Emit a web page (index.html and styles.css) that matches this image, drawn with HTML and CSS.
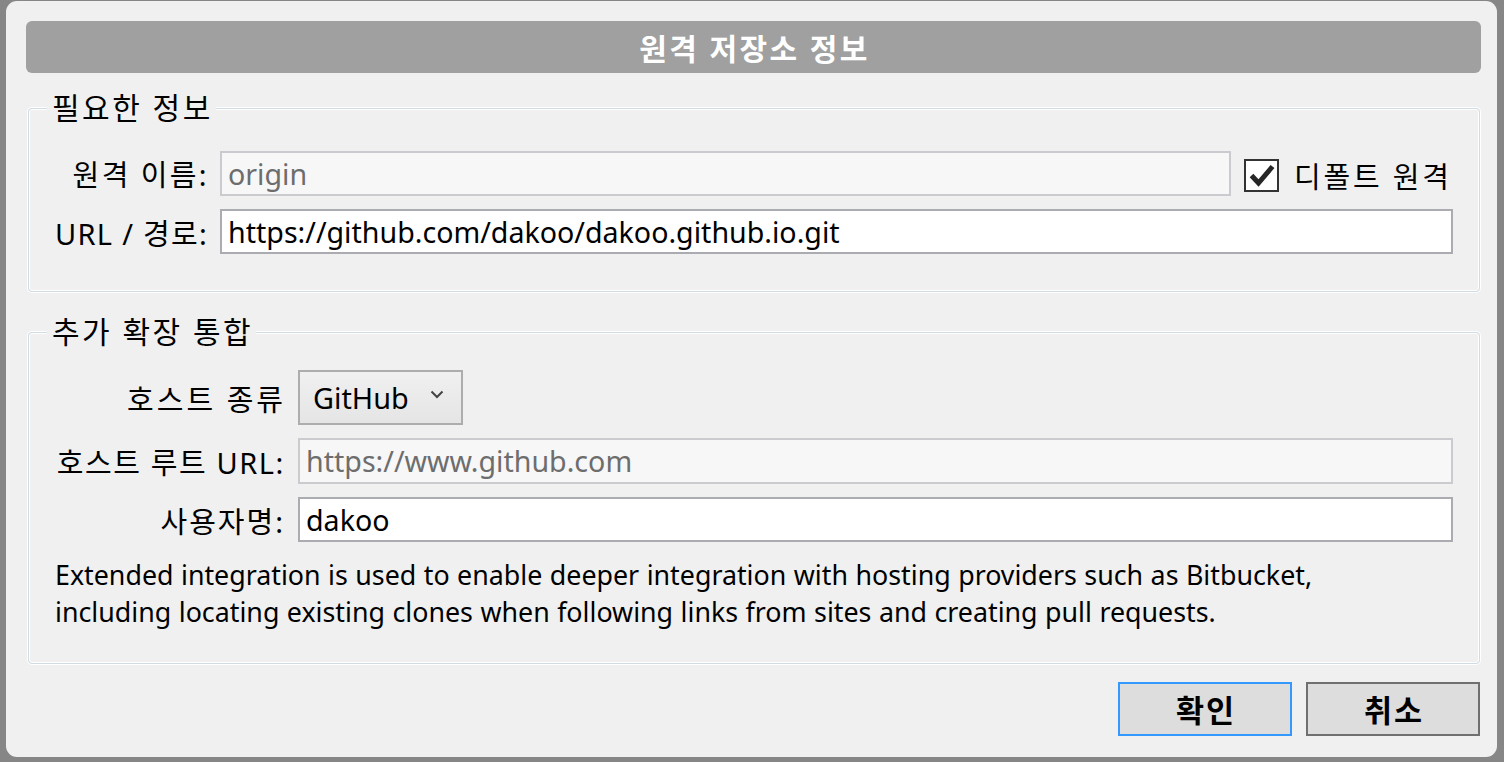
FILE: index.html
```html
<!DOCTYPE html>
<html lang="ko">
<head>
<meta charset="utf-8">
<title>원격 저장소 정보</title>
<link rel="stylesheet" href="styles.css">
</head>
<body>
<div class="dialog">
  <div class="titlebar">원격 저장소 정보</div>

  <section class="group g1">
    <div class="legend">필요한 정보</div>
    <div class="form form1">
      <label class="lbl ls-name">원격 이름:</label>
      <div class="field disabled">origin</div>
      <div class="check-cell">
        <span class="checkbox">
          <svg width="30" height="28" viewBox="0 0 30 28"><path d="M4.5 14.5 L11.5 22 L25.5 5.5" fill="none" stroke="#262626" stroke-width="5" stroke-linejoin="miter" stroke-linecap="butt"/></svg>
        </span>
        <span class="check-text">디폴트 원격</span>
      </div>
      <label class="lbl ls-url">URL / 경로:</label>
      <div class="field wide">https://github.com/dakoo/dakoo.github.io.git</div>
    </div>
  </section>

  <section class="group g2">
    <div class="legend">추가 확장 통합</div>
    <div class="form form2">
      <label class="lbl ls-kind">호스트 종류</label>
      <div class="combo">
        <span class="combo-text">GitHub</span>
        <svg class="chev" width="14" height="9" viewBox="0 0 14 9"><path d="M1.5 1.5 L7 7 L12.5 1.5" fill="none" stroke="#444" stroke-width="2"/></svg>
      </div>
      <label class="lbl ls-root">호스트 루트 URL:</label>
      <div class="field disabled tall">https://www.github.com</div>
      <label class="lbl ls-user">사용자명:</label>
      <div class="field">dakoo</div>
    </div>
    <p class="desc">Extended integration is used to enable deeper integration with hosting providers such as Bitbucket,<br>including locating existing clones when following links from sites and creating pull requests.</p>
  </section>

  <div class="buttons">
    <button class="btn primary">확인</button>
    <button class="btn">취소</button>
  </div>
</div>
</body>
</html>
```

FILE: styles.css
```css
html, body {
  margin: 0;
  padding: 0;
}
body {
  width: 1504px;
  height: 762px;
  background: #868686;
  overflow: hidden;
  font-family: "Noto Sans", "Noto Sans CJK KR", sans-serif;
  color: #000;
}
.dialog {
  box-sizing: border-box;
  margin: 1px 0 0 6px;
  width: 1491px;
  height: 756px;
  background: #f0f0f0;
  border-radius: 11px;
  padding: 20px 16px 0 20px;
  display: flex;
  flex-direction: column;
}
.titlebar {
  height: 52px;
  background: #a0a0a0;
  border-radius: 6px;
  color: #fff;
  font-weight: bold;
  font-size: 30px;
  letter-spacing: 2.4px;
  display: flex;
  align-items: center;
  justify-content: center;
  padding-left: 2px;
}
.group {
  margin: 35px 1px 0 2px;
  border: 1px solid #d0dbe2;
  border-radius: 4px;
  box-shadow: 0 0 0 1px #fff, inset 0 0 0 1px #fff;
  display: flex;
  flex-direction: column;
  padding: 0 26px 37px 26px;
}
.g2 {
  margin-top: 40px;
  padding-bottom: 33px;
}
.legend {
  align-self: flex-start;
  margin: -19px 0 0 -8px;
  padding: 0 3px 0 5px;
  background: #f0f0f0;
  height: 36px;
  line-height: 36px;
  font-size: 30px;
  letter-spacing: 2.5px;
}
.form {
  display: grid;
  align-items: center;
  row-gap: 13px;
}
.form1 {
  margin-top: 24px;
  grid-template-columns: 152px 1fr 209px;
  column-gap: 13px;
}
.form2 {
  margin-top: 20px;
  grid-template-columns: 228px 1fr;
  column-gap: 15px;
}
.lbl {
  text-align: right;
  font-size: 29px;
  white-space: nowrap;
}
.ls-name { letter-spacing: 2.4px; margin-right: -2px; }
.ls-url { letter-spacing: 1.3px; margin-right: -1px; }
.ls-kind { letter-spacing: 3px; margin-right: -3px; }
.ls-root { letter-spacing: 1.6px; margin-right: -2px; }
.ls-user { letter-spacing: 2px; margin-right: -2px; }
.field {
  box-sizing: border-box;
  height: 45px;
  border: 2px solid #ababb2;
  background: #fff;
  padding: 0 6px;
  font-size: 28.6px;
  line-height: 41px;
  white-space: nowrap;
  overflow: hidden;
}
.field.wide {
  grid-column: 2 / 4;
}
.field.tall {
  height: 46px;
  line-height: 42px;
}
.field.disabled {
  background: #f7f7f7;
  border-color: #cacacf;
  color: #6d6d6d;
}
.check-cell {
  display: flex;
  align-items: center;
  gap: 15px;
}
.checkbox {
  box-sizing: border-box;
  width: 35px;
  height: 33px;
  border: 2px solid #333;
  background: #fff;
  display: flex;
  align-items: center;
  justify-content: center;
  margin-top: 4px;
}
.check-text {
  font-size: 29px;
  letter-spacing: 2.8px;
  white-space: nowrap;
  margin-top: 4px;
}
.combo {
  box-sizing: border-box;
  justify-self: start;
  width: 165px;
  height: 55px;
  border: 2px solid #adadad;
  background: linear-gradient(#f0f0f0, #e5e5e5);
  display: flex;
  align-items: center;
  padding: 0 17px 0 13px;
  justify-content: space-between;
}
.combo-text {
  font-size: 28.8px;
}
.chev {
  margin-top: -6px;
}
.desc {
  margin: 14px 0 0 0;
  font-size: 26.8px;
  line-height: 37px;
  word-spacing: 0.5px;
  white-space: nowrap;
}
.buttons {
  display: flex;
  justify-content: flex-end;
  gap: 14px;
  margin: 18px 1px 0 0;
}
.btn {
  box-sizing: border-box;
  width: 174px;
  height: 54px;
  background: #dddddd;
  border: 2px solid #707070;
  font-family: "Noto Sans", "Noto Sans CJK KR", sans-serif;
  font-weight: bold;
  font-size: 30.5px;
  letter-spacing: 2px;
  padding: 0 0 0 2px;
  color: #000;
}
.btn.primary {
  border-color: #3399ff;
}
```
